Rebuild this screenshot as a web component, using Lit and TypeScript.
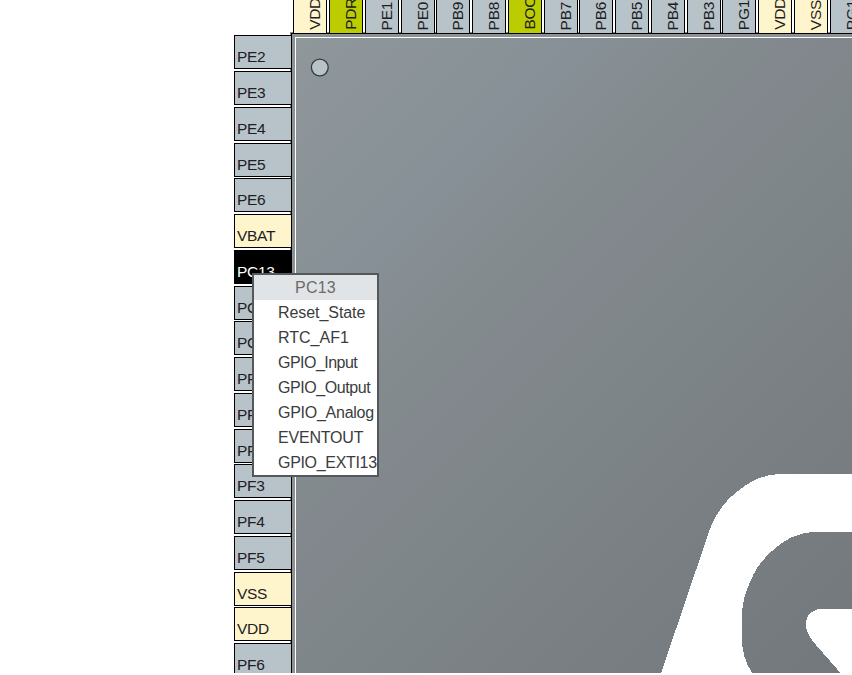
import { LitElement, html, css } from "lit";
import { customElement, property } from "lit/decorators.js";
import { classMap } from "lit/directives/class-map.js";
import { styleMap } from "lit/directives/style-map.js";

type Kind = "io" | "power" | "boot" | "selected";
interface Pin { name: string; kind: Kind }
interface Mode { name: string; tracking: number }

const pin = (name: string, kind: Kind = "io"): Pin => ({ name, kind });

const TOP_PINS: Pin[] = [
  pin("VDD", "power"), pin("PDR", "boot"), pin("PE1"), pin("PE0"), pin("PB9"), pin("PB8"),
  pin("BOO", "boot"), pin("PB7"), pin("PB6"), pin("PB5"), pin("PB4"), pin("PB3"),
  pin("PG1"), pin("VDD", "power"), pin("VSS", "power"), pin("PG1"),
];

const LEFT_PINS: Pin[] = [
  pin("PE2"), pin("PE3"), pin("PE4"), pin("PE5"), pin("PE6"), pin("VBAT", "power"),
  pin("PC13", "selected"), pin("PC14"), pin("PC15"), pin("PF0"), pin("PF1"), pin("PF2"),
  pin("PF3"), pin("PF4"), pin("PF5"), pin("VSS", "power"), pin("VDD", "power"), pin("PF6"),
];

const MODES: Mode[] = [
  { name: "Reset_State", tracking: -0.07 },
  { name: "RTC_AF1", tracking: 0 },
  { name: "GPIO_Input", tracking: -0.52 },
  { name: "GPIO_Output", tracking: -0.42 },
  { name: "GPIO_Analog", tracking: -0.26 },
  { name: "EVENTOUT", tracking: -0.2 },
  { name: "GPIO_EXTI13", tracking: -0.32 },
];

@customElement("pin-menu")
export class PinMenu extends LitElement {
  @property() heading = "";
  @property({ attribute: false }) items: Mode[] = [];

  static styles = css`
    :host {
      display: block;
      box-sizing: border-box;
      width: 127px;
      border: 2px solid #54585a;
      background: #fff;
      color: #3a3c3e;
      font: 16px/25px "Liberation Sans", Arial, sans-serif;
      white-space: nowrap;
    }
    .heading { background: #e1e4e7; color: #6b6b6b; text-align: center; letter-spacing: 0.2px; }
    .item { padding-left: 24px; }
  `;

  render() {
    return html`
      <div class="heading">${this.heading}</div>
      ${this.items.map((m) => html`<div class="item" style=${styleMap({ letterSpacing: `${m.tracking}px` })}>${m.name}</div>`)}
    `;
  }
}

@customElement("app-root")
export class AppRoot extends LitElement {
  static styles = css`
    :host {
      display: block;
      position: relative;
      width: 852px;
      height: 675px;
      overflow: hidden;
      background: #fff;
      font: 15.5px/17px "Liberation Sans", Arial, sans-serif;
      letter-spacing: -0.3px;
      color: #1c2023;
    }
    .board {
      display: grid;
      grid-template: 33px 640px / 291px 561px;
      height: 673px;
      overflow: hidden;
    }
    .pin {
      box-sizing: border-box;
      flex: none;
      display: flex;
      border: 1px solid #000;
      background: #b8c3c9;
      white-space: nowrap;
      z-index: 1;
    }
    .power { background: #fef5cd; }
    .boot { background: #bbcc01; }
    .selected { background: #000; color: #fff; }
    .top {
      grid-area: 1 / 2;
      display: flex;
      align-items: flex-end;
      padding-left: 2px;
      min-width: 0;
    }
    .top .pin {
      width: 34px;
      height: 60px;
      margin-right: 2px;
      border-bottom: 0;
      justify-content: flex-end;
      align-items: flex-end;
    }
    .top .pin:nth-child(4n) { margin-right: 1px; }
    .top .label {
      writing-mode: vertical-rl;
      transform: rotate(180deg);
      margin: 0 3px 3px 0;
    }
    .left {
      grid-area: 2 / 1;
      display: flex;
      flex-direction: column;
      align-items: flex-end;
      padding-top: 2px;
    }
    .left .pin {
      width: 57px;
      height: 34px;
      margin-bottom: 2px;
      border-right: 0;
      align-items: flex-end;
      padding: 0 0 3px 2px;
    }
    .left .pin:nth-child(4n) { margin-bottom: 1px; }
    .chip {
      grid-area: 2 / 2;
      box-sizing: border-box;
      display: grid;
      border: solid #000;
      border-width: 1px 0 0 1px;
      padding: 3px 0 0 3px;
      background: #8d9295;
      box-shadow: 0 0 0 1px #858b90;
    }
    .die {
      grid-area: 1 / 1;
      border: solid #fff;
      border-width: 1px 0 0 1px;
      background: linear-gradient(135deg, #8f979b 0%, #879096 25%, #848b8f 36%, #81878c 46%, #7f8689 54%, #797f82 74%, #72787b 100%);
    }
    svg { display: block; width: 556px; height: 635px; }
    .dot { fill: #b8c3c9; stroke: #353b40; stroke-width: 1.3; }
    .logo { fill: #fff; shape-rendering: crispEdges; }
    pin-menu { position: absolute; left: 252px; top: 273px; z-index: 2; }
  `;

  private renderPin(p: Pin) {
    return html`<div class=${classMap({ pin: true, [p.kind]: true })}><span class="label">${p.name}</span></div>`;
  }

  render() {
    return html`
      <div class="board">
        <div class="top">${TOP_PINS.map((p) => this.renderPin(p))}</div>
        <div class="left">${LEFT_PINS.map((p) => this.renderPin(p))}</div>
        <div class="chip">
          <div class="die">
            <svg viewBox="296 38 556 635">
              <circle class="dot" cx="319.8" cy="67.5" r="8.4" />
              <path class="logo" d="M661 673 L676.7 627 L709 531.7 Q718 506 738 491 Q757 475 779 474 H852 V532 H812
                Q791 534 776 547.5 Q758 562 751 580 Q742 598 742 616 V640 Q742 657 752 673 Z" />
              <path class="logo" d="M852 609 H819 Q806 612 806 624 Q806 633 813 641.5 L840.5 673 H852 Z" />
            </svg>
          </div>
        </div>
      </div>
      <pin-menu .heading=${"PC13"} .items=${MODES}></pin-menu>
    `;
  }
}
